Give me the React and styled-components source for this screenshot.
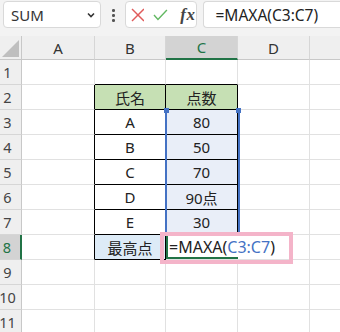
import React from 'react';
import styled, { createGlobalStyle } from 'styled-components';

const Global = createGlobalStyle`
  html, body { margin: 0; padding: 0; background: #fff; }
  body { font-family: "Noto Sans", "Noto Sans CJK JP", sans-serif; overflow: hidden; }
`;

const Frame = styled.div`
  width: 340px;
  height: 332px;
  overflow: hidden;
  background: #fff;
`;

const TopBar = styled.div`
  height: 36px;
  box-sizing: border-box;
  background: #f3f3f3;
  display: flex;
  align-items: flex-start;
  padding: 1px 0 0 3px;
  overflow: hidden;
`;

const Box = styled.div`
  height: 27px;
  box-sizing: border-box;
  background: #fff;
  border: 1px solid #d9d9d9;
  border-radius: 4px;
  display: flex;
  align-items: center;
  flex: none;
`;

const NameBox = styled(Box)`
  width: 98px;
  padding: 0 4px 0 7px;
  justify-content: space-between;
  font-size: 15px;
  color: #333;
`;

const Dots = styled.div`
  width: 3px;
  margin: 0 10px 0 11px;
  padding-top: 8px;
  display: flex;
  flex-direction: column;
  gap: 2.5px;
  span {
    width: 2.5px;
    height: 2.5px;
    border-radius: 50%;
    background: #555;
  }
`;

const IconBox = styled(Box)`
  width: 72px;
  padding-left: 5px;
  gap: 9px;
`;

const Fx = styled.span`
  font-family: "Liberation Serif", "DejaVu Serif", serif;
  font-style: italic;
  font-weight: bold;
  font-size: 17px;
  color: #444;
  margin-left: 3px;
  letter-spacing: 0.5px;
`;

const FormulaBox = styled(Box)`
  margin-left: 6px;
  width: 160px;
  padding-left: 12px;
  font-size: 15.5px;
  color: #222;
  border-right: none;
  border-radius: 4px 0 0 4px;
`;

const Sheet = styled.div`
  position: relative;
  display: grid;
  grid-template-columns: 22px 73px 71px 72px 72px 40px;
  grid-template-rows: 24px repeat(11, 25px);
`;

const Corner = styled.div`
  background: #efefef;
  border-right: 1px solid #c8c8c8;
  border-bottom: 1px solid #c8c8c8;
  position: relative;
  display: flex;
  align-items: flex-end;
  justify-content: flex-end;
  padding: 0 2px 2px 0;
`;

const ColHead = styled.div`
  background: ${p => (p.$active ? '#d3d3d3' : '#efefef')};
  border-right: 1px solid #d6d6d6;
  border-bottom: ${p => (p.$active ? '2px solid #217346' : '1px solid #c8c8c8')};
  color: ${p => (p.$active ? '#217346' : '#333')};
  font-size: 15px;
  display: flex;
  align-items: center;
  justify-content: center;
`;

const RowHead = styled.div`
  background: ${p => (p.$active ? '#d3d3d3' : '#efefef')};
  border-right: ${p => (p.$active ? '2px solid #217346' : '1px solid #c8c8c8')};
  border-bottom: 1px solid #d6d6d6;
  color: ${p => (p.$active ? '#217346' : '#444')};
  font-size: 14.5px;
  display: flex;
  align-items: center;
  justify-content: center;
  padding-right: 6px;
`;

const Cell = styled.div`
  border-right: 1px solid ${p => p.$rc || '#e1e1e1'};
  border-bottom: 1px solid ${p => p.$bc || '#e1e1e1'};
  background: ${p => p.$bg || 'transparent'};
  font-size: 15px;
  color: #222;
  display: flex;
  align-items: center;
  justify-content: center;
`;

const ActiveCell = styled.div`
  position: relative;
  z-index: 1;
  border-bottom: 1px solid #e1e1e1;
  box-shadow: inset 2px -2px 0 #217346;
  display: flex;
  align-items: center;
  padding-left: 3px;
  white-space: nowrap;
  overflow: visible;
  font-size: 16px;
  color: #222;
`;

const Ref = styled.span`
  color: #4472c4;
`;

const Caret = styled.span`
  display: inline-block;
  width: 1px;
  height: 19px;
  background: #8a8a8a;
  margin-left: 2px;
`;

const RefRange = styled.div`
  position: absolute;
  left: 165px;
  top: 74px;
  width: 75px;
  height: 125px;
  box-sizing: border-box;
  border: 2px solid #4472c4;
  border-top: none;
  pointer-events: none;
  z-index: 2;
`;

const Handle = styled.div`
  position: absolute;
  top: -2px;
  ${p => (p.$right ? 'right: -3px;' : 'left: -3px;')}
  width: 5px;
  height: 5px;
  background: #4472c4;
`;

const Highlight = styled.div`
  position: absolute;
  left: 160px;
  top: 196px;
  width: 133px;
  height: 32px;
  box-sizing: border-box;
  border: 4px solid #f4b4c9;
  z-index: 3;
  pointer-events: none;
`;

const GREEN = '#c6e0b4';
const BLUE_FILL = '#e9eef8';
const B8_FILL = '#ddebf7';

const rows = [
  { n: 1, b: '', c: '' },
  { n: 2, b: '氏名', c: '点数', head: true },
  { n: 3, b: 'A', c: '80' },
  { n: 4, b: 'B', c: '50' },
  { n: 5, b: 'C', c: '70' },
  { n: 6, b: 'D', c: '90点' },
  { n: 7, b: 'E', c: '30' },
  { n: 8, b: '最高点', formula: true },
  { n: 9 }, { n: 10 }, { n: 11 },
];

export default function App() {
  return (
    <Frame>
      <Global />
      <TopBar>
        <NameBox>
          <span>SUM</span>
          <svg width="10" height="8" viewBox="0 0 10 8">
            <polyline points="2,2.5 5,5.5 8,2.5" fill="none" stroke="#333" strokeWidth="1.6" />
          </svg>
        </NameBox>
        <Dots><span /><span /><span /></Dots>
        <IconBox>
          <svg width="14" height="14" viewBox="0 0 14 14">
            <line x1="1" y1="1" x2="13" y2="13" stroke="#e05b5b" strokeWidth="1.4" />
            <line x1="13" y1="1" x2="1" y2="13" stroke="#e05b5b" strokeWidth="1.4" />
          </svg>
          <svg width="15" height="12" viewBox="0 0 15 12">
            <polyline points="1,6 5,10.5 14,1" fill="none" stroke="#62b862" strokeWidth="1.4" />
          </svg>
          <Fx>fx</Fx>
        </IconBox>
        <FormulaBox>=MAXA(C3:C7)</FormulaBox>
      </TopBar>
      <Sheet>
        <Corner>
          <svg width="17" height="17" viewBox="0 0 17 17">
            <polygon points="17,0 17,17 0,17" fill="#bfbfbf" />
          </svg>
        </Corner>
        <ColHead>A</ColHead>
        <ColHead>B</ColHead>
        <ColHead $active>C</ColHead>
        <ColHead>D</ColHead>
        <ColHead />
        {rows.map(r => {
          const inTable = r.n >= 2 && r.n <= 8;
          const aboveTable = r.n === 1;
          return (
            <React.Fragment key={r.n}>
              <RowHead $active={r.n === 8}>{r.n}</RowHead>
              <Cell $rc={inTable ? '#000' : undefined} />
              <Cell
                $rc={inTable ? '#000' : undefined}
                $bc={inTable || aboveTable ? '#000' : undefined}
                $bg={r.head ? GREEN : r.formula ? B8_FILL : undefined}
              >
                {r.b}
              </Cell>
              {r.formula ? (
                <ActiveCell>
                  =MAXA(<Ref>C3:C7</Ref>)<Caret />
                </ActiveCell>
              ) : (
                <Cell
                  $rc={inTable ? '#000' : undefined}
                  $bc={inTable || aboveTable ? '#000' : undefined}
                  $bg={r.head ? GREEN : inTable ? BLUE_FILL : undefined}
                >
                  {r.c}
                </Cell>
              )}
              <Cell />
              <Cell />
            </React.Fragment>
          );
        })}
        <RefRange>
          <Handle />
          <Handle $right />
        </RefRange>
        <Highlight />
      </Sheet>
    </Frame>
  );
}
